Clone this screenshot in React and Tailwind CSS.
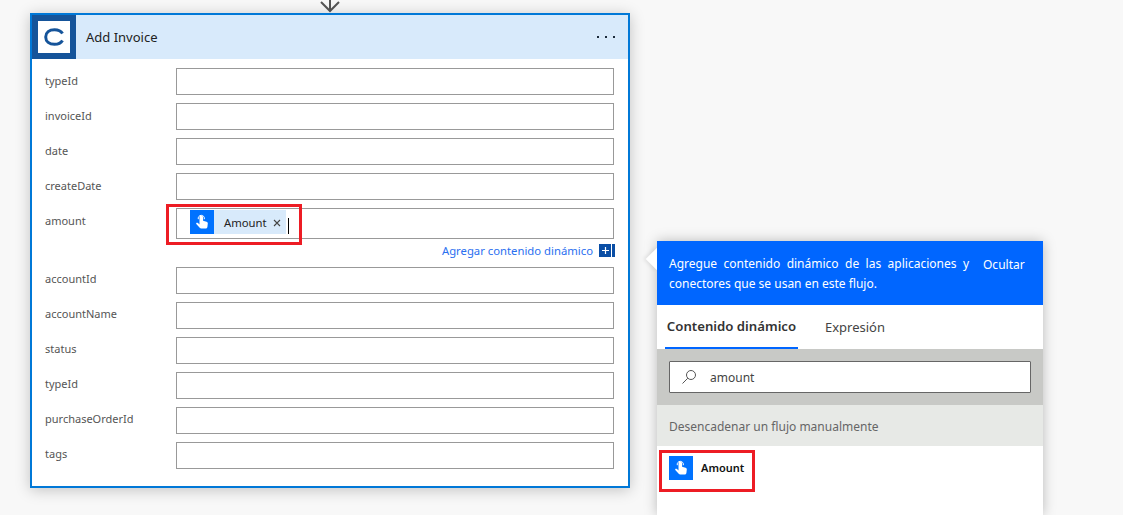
const font = { fontFamily: '"Noto Sans", sans-serif' };

function Touch() {
  return (
    <div className="w-6 h-6 bg-[#0072ff] flex items-center justify-center shrink-0">
      <svg width="14" height="16" viewBox="0 0 14 16" fill="white">
        <path d="M4.500 3.400a1.800 1.800 0 0 1 3.600 0v3.400l3.400.9c.9.3 1.400 1 1.300 1.900l-.4 3.400c-.1.900-.8 1.500-1.700 1.500H6.200c-.6 0-1.100-.3-1.500-.8L1.300 10c-.4-.6 0-1.300.7-1.300.4 0 .7.100 1 .4l1.500 1.400z" />
        <path d="M3.300 5.200a3.100 3.100 0 1 1 6 0" fill="none" stroke="white" strokeWidth="1" />
      </svg>
    </div>
  );
}

function Field({ label, tall, lower, children }) {
  return (
    <div className="flex items-start">
      <div className={`w-[132px] shrink-0 pl-[1px] ${lower ? "pt-[3px]" : "pt-[4px]"} text-[11px] leading-[18px] text-[#555]`}>{label}</div>
      <div className={`w-[438px] ${tall ? "h-[31px]" : "h-[27px]"} border border-[#999] bg-white flex items-start`}>
        {children}
      </div>
    </div>
  );
}

export default function App() {
  const top = ["typeId", "invoiceId", "date", "createDate"];
  const bottom = ["accountId", "accountName", "status", "typeId", "purchaseOrderId", "tags"];
  return (
    <div style={font} className="w-[1123px] h-[515px] overflow-hidden bg-[#f8f8f8] flex items-start pl-[30px]">
      <div className="w-[600px] shrink-0 flex flex-col">
        <div className="h-[13px] flex justify-center overflow-hidden">
          <svg width="22" height="13" viewBox="0 0 22 13" fill="none" stroke="#555" strokeWidth="2">
            <path d="M11 -2V11M2 2l9 9 9-9" />
          </svg>
        </div>
        <div className="h-[475px] border-2 border-[#0078d7] bg-white shadow-[0_2px_14px_rgba(0,0,0,0.22)]">
          <div className="h-[44px] bg-[#d8eafb] flex items-center">
            <div className="w-[44px] h-[44px] bg-[#15549a] flex items-center justify-center">
              <div className="w-[32px] h-[32px] bg-white flex items-center justify-center">
                <svg width="20" height="18" viewBox="0 0 20 18" fill="none" stroke="#15549a" strokeWidth="3">
                  <path d="M18.500 5.500C17 3 14 1.700 10.500 1.700 5.300 1.700 1.700 4.700 1.700 9s3.600 7.300 8.800 7.300c3.500 0 6.500-1.300 8-3.800" />
                </svg>
              </div>
            </div>
            <div className="ml-[10px] pt-[2px] text-[13px] text-[#222]">Add Invoice</div>
            <div className="ml-auto mr-[13px] flex gap-[6px]">
              <span className="w-[2px] h-[2px] bg-[#1a2a3a]" />
              <span className="w-[2px] h-[2px] bg-[#1a2a3a]" />
              <span className="w-[2px] h-[2px] bg-[#1a2a3a]" />
            </div>
          </div>
          <div className="pl-[12px] pt-[9px] flex flex-col">
            <div className="flex flex-col gap-[8px]">
              {top.map((l) => <Field key={l} label={l} />)}
              <div className="relative">
                <Field label="amount" tall>
                  <div className="ml-[13px] mt-[1px] h-[24px] w-[96px] flex items-center bg-[#d8eafb]">
                    <Touch />
                    <span className="ml-[10px] pt-[2px] text-[11.3px] text-[#222]">Amount</span>
                    <span className="ml-[6px] pt-[1px] flex">
                      <svg width="8" height="8" viewBox="0 0 8 8" stroke="#444" strokeWidth="1.100"><path d="M1 1l6 6M7 1 1 7" /></svg>
                    </span>
                  </div>
                  <span className="ml-[2px] mt-[9px] w-[1px] h-[16px] bg-black" />
                </Field>
                <div className="absolute left-[122px] top-[-4px] w-[136px] h-[41px] border-[3px] border-[#ed1c24]" />
              </div>
            </div>
            <div className="h-[28px] w-[571px] pt-[5px] flex items-start justify-end">
              <span className="text-[11.3px] leading-[14px] text-[#2a6ff0] mr-[6px]">Agregar contenido dinámico</span>
              <div className="w-[12px] h-[13px] bg-[#0a4ea5] flex items-center justify-center">
                <svg width="7" height="7" viewBox="0 0 7 7" stroke="white" strokeWidth="1.200"><path d="M3.500 0v7M0 3.500h7" /></svg>
              </div>
              <div className="ml-[1px] w-[3px] h-[13px] bg-[#0a4ea5]" />
            </div>
            <div className="flex flex-col gap-[8px]">
              {bottom.map((l, i) => <Field key={l + i} label={l} lower />)}
            </div>
          </div>
        </div>
      </div>

      <div className="relative ml-[27px] mt-[241px] w-[386px] h-[274px] shrink-0 bg-white shadow-[0_0_12px_rgba(0,0,0,0.25)] flex flex-col">
        <div className="absolute left-[-8px] top-[10px] w-[16px] h-[16px] rotate-45 bg-white shadow-[-2px_2px_4px_rgba(0,0,0,0.08)]" />
        <div className="relative h-[64px] bg-[#0066ff] flex text-white text-[12px] leading-[20px]">
          <div className="w-[300px] ml-[12px] mt-[13px] text-justify">Agregue contenido dinámico de las aplicaciones y conectores que se usan en este flujo.</div>
          <div className="ml-[14px] mt-[14px]">Ocultar</div>
        </div>
        <div className="h-[44px] flex items-stretch pl-[8px]">
          <div className="w-[133px] pt-[2px] flex items-center justify-center border-b-2 border-[#0066ff] font-semibold text-[13.2px] text-[#333]">Contenido dinámico</div>
          <div className="ml-[27px] pt-[1px] flex items-center text-[13px] text-[#444]">Expresión</div>
        </div>
        <div className="h-[56px] bg-[#c8c9c6] px-[12px] flex items-center">
          <div className="w-full h-[32px] bg-white border border-[#666] rounded-[1px] flex items-center">
            <svg className="ml-[11px]" width="16" height="16" viewBox="0 0 16 16" fill="none" stroke="#555" strokeWidth="1">
              <circle cx="10" cy="6" r="4.500" />
              <path d="M6.800 9.200 1.500 14.500" />
            </svg>
            <span className="ml-[13px] pt-[2px] text-[12px] text-[#444]">amount</span>
          </div>
        </div>
        <div className="h-[41px] bg-[#e7e9e6] pl-[12px] pt-[2px] flex items-center text-[12px] text-[#666]">Desencadenar un flujo manualmente</div>
        <div className="pl-[2px] pt-[4px]">
          <div className="w-[96px] h-[42px] border-[3px] border-[#ed1c24] flex items-start pl-[7px] pt-[3px]">
            <Touch />
            <span className="ml-[8px] leading-[24px] text-[11px] font-semibold text-[#111]">Amount</span>
          </div>
        </div>
      </div>
    </div>
  );
}
